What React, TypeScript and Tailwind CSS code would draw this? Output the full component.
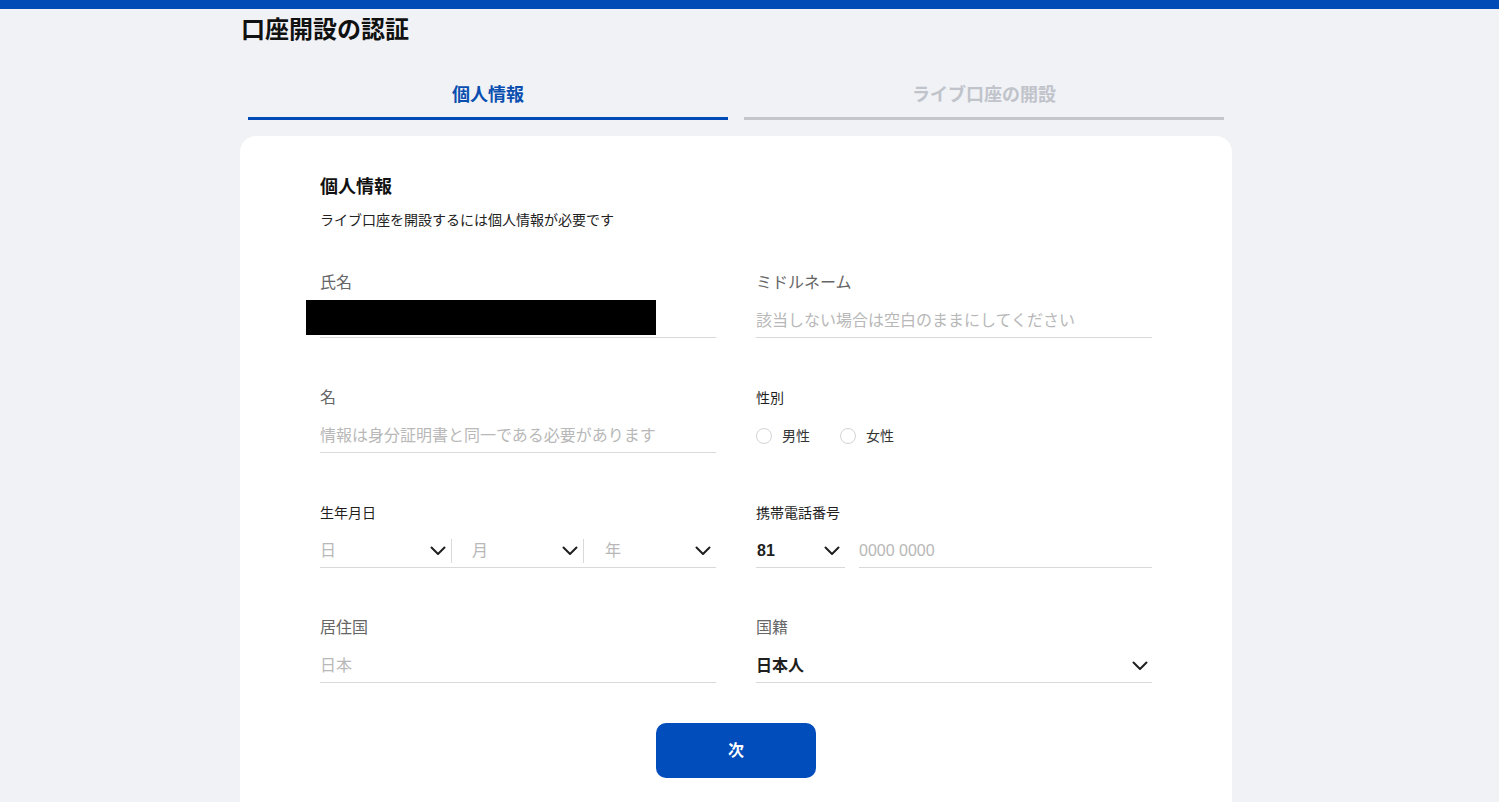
import React from 'react'

function Chevron() {
  return (
    <svg width="16" height="10" viewBox="0 0 16 10" fill="none" className="shrink-0">
      <polyline points="1.5,1.5 8,8 14.5,1.5" stroke="#1f1f1f" strokeWidth="2" strokeLinecap="round" strokeLinejoin="round" />
    </svg>
  )
}

function Field({ label, small, children }: { label: string; small?: boolean; children: React.ReactNode }) {
  return (
    <div className="flex flex-col">
      <div className={small ? 'h-[22px] leading-[22px] text-[14px] text-[#1f1f1f]' : 'h-[22px] leading-[22px] text-[16px] text-[#666666]'}>
        {label}
      </div>
      {children}
    </div>
  )
}

export default function App() {
  const font = { fontFamily: '"Liberation Sans", "Noto Sans CJK JP", sans-serif' }
  return (
    <div className="min-h-screen bg-[#f0f2f6]" style={font}>
      {/* top bar */}
      <div className="h-[9px] bg-[#004bb5]" />

      <div className="ml-[240px] w-[992px]">
        <h1 className="mt-[5px] h-[32px] pl-[1px] text-[24px] font-bold leading-[32px] text-[#111]">口座開設の認証</h1>

        {/* steps */}
        <div className="mt-[36px] flex gap-4 px-2">
          <div className="flex-1 border-b-[3px] border-[#004bb5] pb-[9px] text-center text-[18px] font-bold leading-[26px] text-[#0a4fb0]">
            個人情報
          </div>
          <div className="flex-1 border-b-[3px] border-[#c4c6cb] pb-[9px] text-center text-[18px] font-bold leading-[26px] text-[#c0c3ca]">
            ライブ口座の開設
          </div>
        </div>

        {/* card */}
        <div className="mt-[16px] rounded-2xl bg-white px-[80px] pt-[38px] pb-[40px]">
          <div className="text-[18px] font-bold leading-[26px] text-[#111]">個人情報</div>
          <div className="mt-[10px] text-[14px] leading-[20px] text-[#222]">ライブ口座を開設するには個人情報が必要です</div>

          <div className="mt-[42px] grid grid-cols-2 gap-x-[40px] gap-y-[49px]">
            <Field label="氏名">
              <div className="relative flex h-[44px] items-center border-b border-[#d9d9d9] pt-[10px]">
                <div className="absolute left-[-14px] top-[6px] h-[35px] w-[350px] bg-black" />
              </div>
            </Field>

            <Field label="ミドルネーム">
              <div className="flex h-[44px] items-center border-b border-[#d9d9d9] pt-[10px] text-[16px] text-[#b8b8b8]">
                該当しない場合は空白のままにしてください
              </div>
            </Field>

            <Field label="名">
              <div className="flex h-[44px] items-center border-b border-[#d9d9d9] pt-[10px] text-[16px] text-[#b8b8b8]">
                情報は身分証明書と同一である必要があります
              </div>
            </Field>

            <Field label="性別" small>
              <div className="flex h-[44px] items-center pt-[10px] text-[14px] text-[#333]">
                <span className="h-[16px] w-[16px] rounded-full border border-[#d4d4d8]" />
                <span className="ml-[10px]">男性</span>
                <span className="ml-[30px] h-[16px] w-[16px] rounded-full border border-[#d4d4d8]" />
                <span className="ml-[10px]">女性</span>
              </div>
            </Field>

            <Field label="生年月日" small>
              <div className="grid h-[44px] grid-cols-3 items-center border-b border-[#d9d9d9] pt-[10px] text-[16px] text-[#b8b8b8]">
                <div className="flex h-[24px] items-center justify-between border-r border-[#d9d9d9] pr-[5px]">
                  <span>日</span>
                  <Chevron />
                </div>
                <div className="flex h-[24px] items-center justify-between border-r border-[#d9d9d9] pl-[20px] pr-[5px]">
                  <span>月</span>
                  <Chevron />
                </div>
                <div className="flex h-[24px] items-center justify-between pl-[21px] pr-[5px]">
                  <span>年</span>
                  <Chevron />
                </div>
              </div>
            </Field>

            <Field label="携帯電話番号" small>
              <div className="flex h-[44px] gap-[14px]">
                <div className="flex w-[89px] items-center justify-between border-b border-[#d9d9d9] pt-[10px] pl-[1px] pr-[5px] text-[16px] font-bold text-[#1f1f1f]">
                  <span>81</span>
                  <Chevron />
                </div>
                <div className="flex flex-1 items-center border-b border-[#d9d9d9] pt-[10px] text-[16px] text-[#b8b8b8]">
                  0000 0000
                </div>
              </div>
            </Field>

            <Field label="居住国">
              <div className="flex h-[44px] items-center border-b border-[#d9d9d9] pt-[10px] text-[16px] text-[#b8b8b8]">
                日本
              </div>
            </Field>

            <Field label="国籍">
              <div className="flex h-[44px] items-center justify-between border-b border-[#d9d9d9] pt-[10px] pr-[4px] text-[16px] font-bold text-[#1f1f1f]">
                <span>日本人</span>
                <Chevron />
              </div>
            </Field>
          </div>

          <div className="mt-[40px] flex justify-center">
            <button className="h-[55px] w-[160px] rounded-[10px] bg-[#004dbb] text-[16px] font-bold text-white">次</button>
          </div>
        </div>
      </div>
    </div>
  )
}
